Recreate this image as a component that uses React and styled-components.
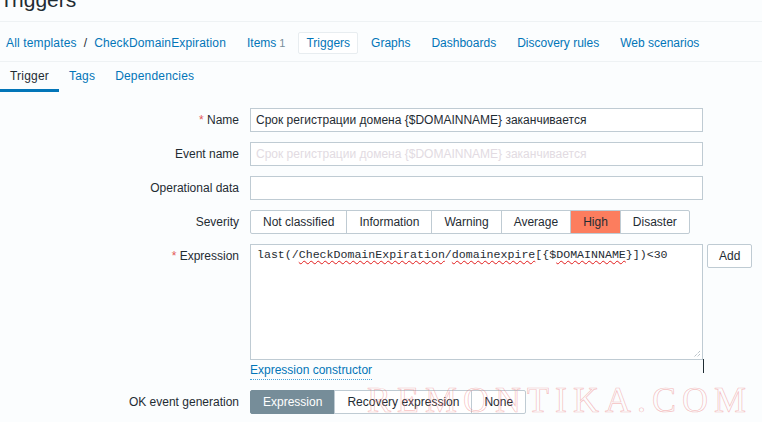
import React from 'react'
import styled, { createGlobalStyle } from 'styled-components';

const GlobalStyle = createGlobalStyle`
    body {
        margin: 0;
        background: #fbfdfe;
        font-family: Arial, "Liberation Sans", sans-serif;
        font-size: 12px;
        color: #1f2c33;
    }
`

const navItems = [
    { label: 'Items', count: 1 },
    { label: 'Triggers', selected: true },
    { label: 'Graphs' },
    { label: 'Dashboards' },
    { label: 'Discovery rules' },
    { label: 'Web scenarios' },
]

const tabs = ['Trigger', 'Tags', 'Dependencies']
const severities = ['Not classified', 'Information', 'Warning', 'Average', 'High', 'Disaster']
const okModes = ['Expression', 'Recovery expression', 'None']

function App() {
    return (
        <>
            <GlobalStyle />
            <Page>
                <Header>
                    <Title>Triggers</Title>
                </Header>
                <Nav>
                    <Breadcrumbs>
                        <NavLink>All templates</NavLink>
                        <Slash>/</Slash>
                        <NavLink>CheckDomainExpiration</NavLink>
                    </Breadcrumbs>
                    {navItems.map(item => (
                        <NavItem key={item.label} selected={item.selected}>
                            {item.label}
                            {item.count && <Count>{item.count}</Count>}
                        </NavItem>
                    ))}
                </Nav>
                <Tabs>
                    {tabs.map((tab, index) => (
                        <Tab key={tab} active={index === 0}>{tab}</Tab>
                    ))}
                </Tabs>
                <Form>
                    <Row>
                        <Label><Required>*</Required> Name</Label>
                        <TextInput readOnly value="Срок регистрации домена {$DOMAINNAME} заканчивается" />
                    </Row>
                    <Row>
                        <Label>Event name</Label>
                        <TextInput readOnly placeholder="Срок регистрации домена {$DOMAINNAME} заканчивается" />
                    </Row>
                    <Row>
                        <Label>Operational data</Label>
                        <TextInput readOnly />
                    </Row>
                    <Row>
                        <Label>Severity</Label>
                        <Segmented>
                            {severities.map(s => (
                                <Segment key={s} selected={s === 'High'} tone="high">{s}</Segment>
                            ))}
                        </Segmented>
                    </Row>
                    <Row>
                        <Label><Required>*</Required> Expression</Label>
                        <Field>
                            <ExpressionBox>
                                last(/<Misspelled>CheckDomainExpiration</Misspelled>/<Misspelled>domainexpire</Misspelled>[{'{'}$<Misspelled>DOMAINNAME</Misspelled>{'}'}])&lt;30
                                <Grip width="9" height="9" viewBox="0 0 9 9">
                                    <path d="M8 2 L2 8 M8 5 L5 8" stroke="#9aa7af" strokeWidth="1" strokeDasharray="1 1" />
                                </Grip>
                            </ExpressionBox>
                            <ActionLink>Expression constructor</ActionLink>
                        </Field>
                        <Button>Add</Button>
                    </Row>
                    <Row>
                        <Label>OK event generation</Label>
                        <Segmented>
                            {okModes.map(m => (
                                <Segment key={m} selected={m === 'Expression'} tone="slate">{m}</Segment>
                            ))}
                        </Segmented>
                    </Row>
                </Form>
                <Cursor />
                <Watermark>REMONTIKA.COM</Watermark>
            </Page>
        </>
    )
}

export default App;

const Page = styled.div`
    position: relative;
    width: 762px;
    height: 422px;
    overflow: hidden;
`

const Header = styled.div`
    height: 21px;
    overflow: hidden;
    border-bottom: 1px solid #eef2f4;
`

const Title = styled.h1`
    margin: -12px 0 0 0;
    font-size: 21px;
    line-height: 24px;
    font-weight: normal;
    color: #1f2c33;
`

const Nav = styled.div`
    display: flex;
    align-items: center;
    gap: 5px;
    padding: 10px 0 7px;
    border-bottom: 1px solid #eef2f4;
`

const Breadcrumbs = styled.div`
    display: flex;
    align-items: center;
    padding: 0 8px 0 6px;
    line-height: 14px;
    letter-spacing: 0.15px;
`

const NavLink = styled.span`
    color: #0275b8;
`

const Slash = styled.span`
    margin: 0 7px;
    color: #1f2c33;
`

const NavItem = styled.div`
    box-sizing: border-box;
    height: 22px;
    padding: 3px 7px;
    line-height: 14px;
    color: #0275b8;
    border: 1px solid ${props => props.selected ? '#e8edf0' : 'transparent'};
    background: ${props => props.selected ? '#ffffff' : 'transparent'};
    border-radius: 2px;
`

const Count = styled.span`
    margin-left: 3px;
    color: #768d99;
    font-size: 11px;
`

const Tabs = styled.div`
    display: flex;
`

const Tab = styled.div`
    padding: 7px 10px 6px;
    line-height: 14px;
    letter-spacing: 0.2px;
    color: ${props => props.active ? '#1f2c33' : '#0275b8'};
    border-bottom: 3px solid ${props => props.active ? '#0275b8' : 'transparent'};
`

const Form = styled.div`
    display: flex;
    flex-direction: column;
    gap: 10px;
    padding-top: 16px;
`

const Row = styled.div`
    display: flex;
    align-items: flex-start;
`

const Label = styled.div`
    width: 239px;
    margin-right: 11px;
    padding-top: 5px;
    line-height: 14px;
    text-align: right;
    color: #1f2c33;
`

const Required = styled.span`
    color: #e45959;
`

const TextInput = styled.input`
    box-sizing: border-box;
    width: 453px;
    height: 24px;
    margin: 0;
    padding: 0 5px;
    border: 1px solid #bfcbd3;
    border-radius: 0;
    background: #ffffff;
    font-family: Arial, "Liberation Sans", sans-serif;
    font-size: 12px;
    color: #1f2c33;
    outline: none;
    &::placeholder {
        color: #e2dbe2;
    }
`

const Segmented = styled.div`
    display: flex;
`

const Segment = styled.div`
    box-sizing: border-box;
    height: 24px;
    padding: 0 12px;
    line-height: 22px;
    white-space: nowrap;
    border: 1px solid ${props => props.selected && props.tone === 'slate' ? '#768d99' : '#bfcbd3'};
    background: ${props => !props.selected ? '#ffffff' : props.tone === 'high' ? '#fc7d5e' : '#768d99'};
    color: ${props => props.selected && props.tone === 'slate' ? '#ffffff' : '#1f2c33'};
    & + & {
        margin-left: -1px;
    }
    &:first-child {
        border-radius: 2px 0 0 2px;
    }
    &:last-child {
        border-radius: 0 2px 2px 0;
    }
`

const Field = styled.div`
    display: flex;
    flex-direction: column;
    align-items: flex-start;
`

const ExpressionBox = styled.div`
    position: relative;
    box-sizing: border-box;
    width: 453px;
    height: 116px;
    padding: 3px 6px;
    border: 1px solid #bfcbd3;
    background: #ffffff;
    font-family: "Liberation Mono", "Courier New", monospace;
    font-size: 11.6px;
    line-height: 14px;
    color: #1f2c33;
`

const Misspelled = styled.span`
    text-decoration: underline wavy #e21b1b;
    text-decoration-thickness: 1px;
    text-underline-offset: 2px;
`

const Grip = styled.svg`
    position: absolute;
    right: 1px;
    bottom: 1px;
`

const ActionLink = styled.span`
    margin-top: 3px;
    padding-bottom: 2px;
    line-height: 14px;
    color: #0275b8;
    border-bottom: 1px dotted #4aa3d8;
`

const Button = styled.div`
    box-sizing: border-box;
    height: 24px;
    margin-left: 4px;
    padding: 0 11px;
    line-height: 22px;
    border: 1px solid #bfcbd3;
    border-radius: 2px;
    background: #ffffff;
    color: #1f2c33;
`

const Cursor = styled.div`
    position: absolute;
    left: 703px;
    top: 359px;
    width: 1px;
    height: 14px;
    background: #1f2c33;
`

const Watermark = styled.div`
    position: absolute;
    left: 367px;
    top: 382px;
    font-family: "Liberation Serif", "Times New Roman", serif;
    font-size: 36px;
    line-height: 36px;
    letter-spacing: 6px;
    color: transparent;
    -webkit-text-stroke: 0.7px rgba(238, 130, 130, 0.5);
    pointer-events: none;
    white-space: nowrap;
`
